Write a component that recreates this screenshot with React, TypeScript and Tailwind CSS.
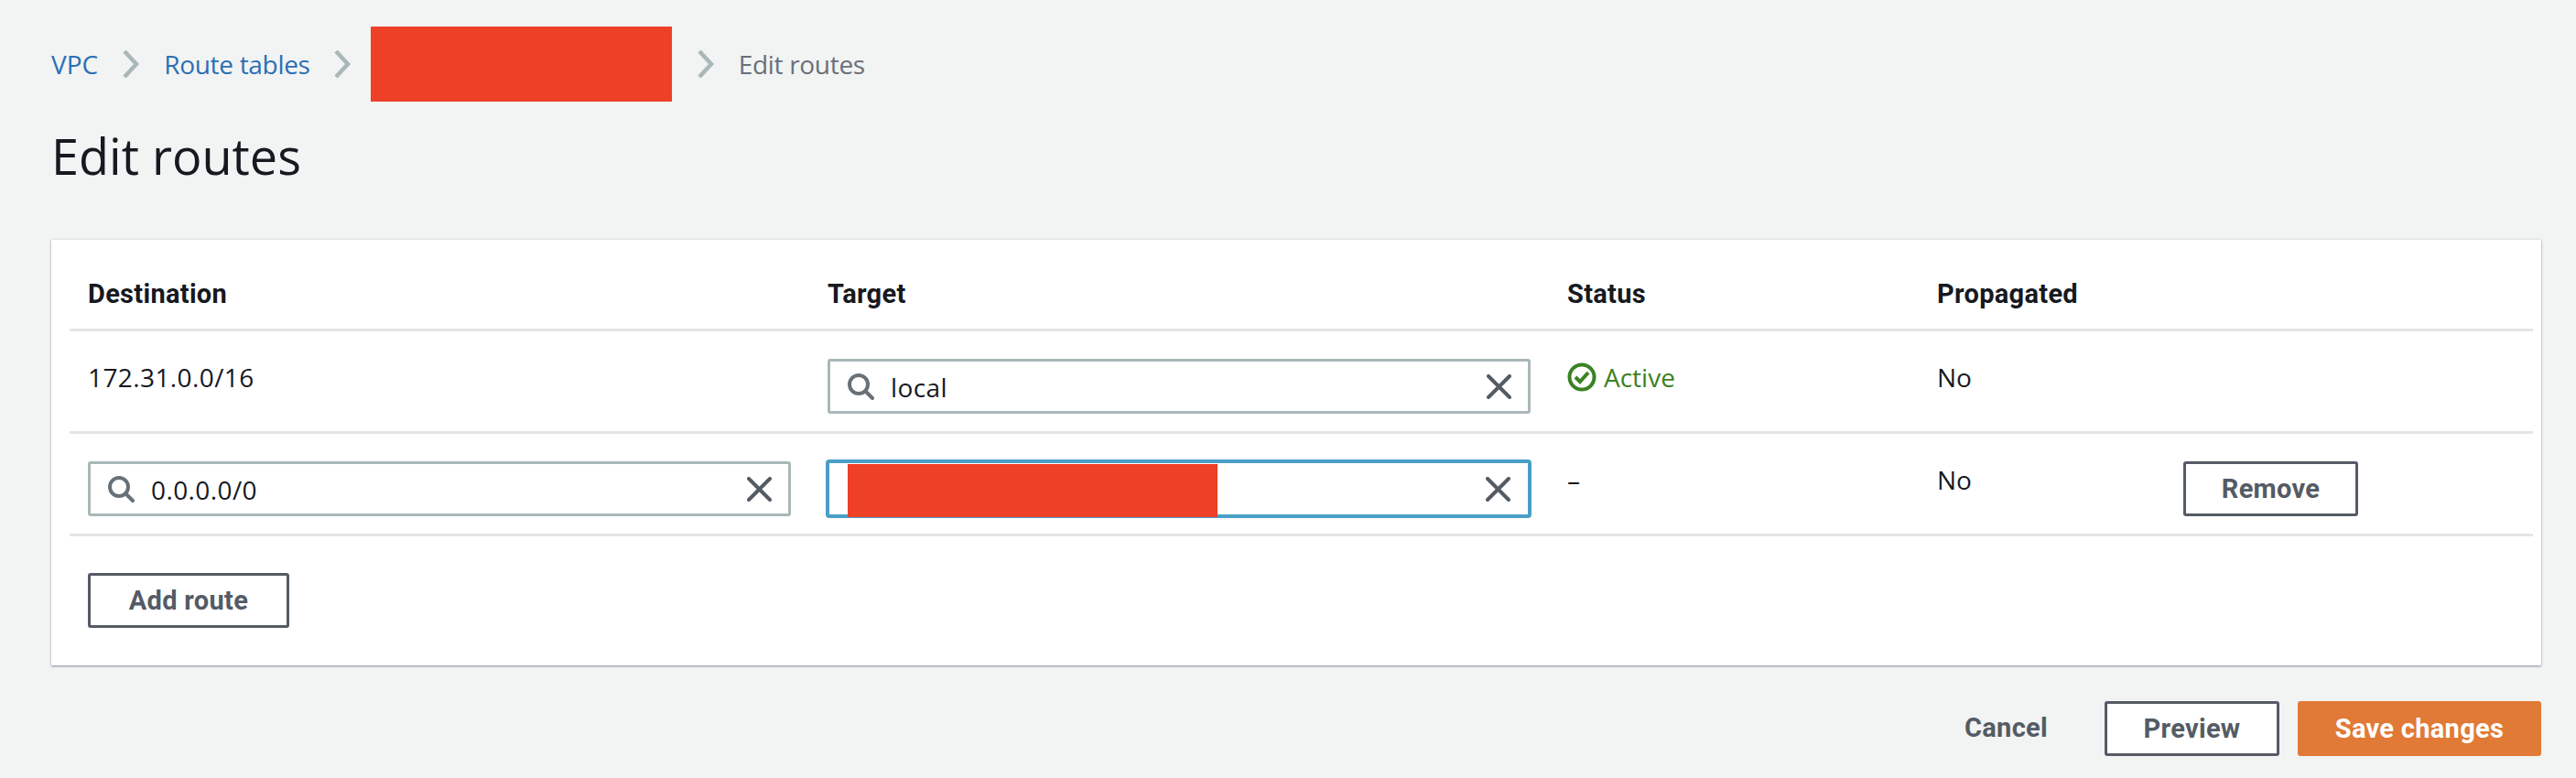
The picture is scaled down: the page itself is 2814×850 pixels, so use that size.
const ROW = "grid grid-cols-[808px_808px_404px_269px_1fr] items-start pl-[20px] border-b-[3px] border-[#e4e6e6]";
const BOLD = "font-['Roboto',sans-serif] font-bold text-[29px] tracking-[0.3px]";

function Chevron() {
    return (
        <svg width="18" height="30" viewBox="0 0 18 30" fill="none" stroke="#aab7b8" strokeWidth="4.5" className="shrink-0">
            <path d="M2 1 L15 15 L2 29"/>
        </svg>
    );
}

function SearchIcon() {
    return (
        <svg width="29" height="29" viewBox="0 0 29 29" fill="none" stroke="#687078" strokeWidth="4" strokeLinecap="round" className="shrink-0">
            <circle cx="12" cy="12" r="10"/>
            <path d="M20 20 L27 27"/>
        </svg>
    );
}

function ClearIcon() {
    return (
        <svg width="27" height="27" viewBox="0 0 27 27" fill="none" stroke="#545b64" strokeWidth="4" strokeLinecap="round" className="shrink-0">
            <path d="M2 2 L25 25 M25 2 L2 25"/>
        </svg>
    );
}

function StatusIcon() {
    return (
        <svg width="32" height="32" viewBox="0 0 32 32" fill="none" stroke="#3b8224" strokeWidth="4" className="shrink-0">
            <circle cx="16" cy="16" r="13.5"/>
            <path d="M9 16 L14 21 L23 11"/>
        </svg>
    );
}

function SearchInput({value}: {value: string}) {
    return (
        <div className="flex items-center w-[768px] h-[60px] bg-white border-[3px] border-[#aab7b8] rounded-[3px] pl-[19px] pr-[18px]">
            <SearchIcon/>
            <span className="ml-[18px] pt-[2px] flex-1 text-[28px] tracking-[0.4px] text-[#16191f]">{value}</span>
            <ClearIcon/>
        </div>
    );
}

function OutlineButton({label, width}: {label: string, width: string}) {
    return (
        <button className={`${width} ${BOLD} h-[60px] pt-[2px] bg-white border-[3px] border-[#545b64] rounded-[3px] text-[#545b64]`}>
            {label}
        </button>
    );
}

export default function App() {
    return (
        <div className="min-h-[850px] bg-[#f2f3f3] pl-[56px] pr-[38px] font-['Open_Sans',sans-serif] text-[28px] text-[#16191f]">
            <div className="flex items-center pt-[29px] h-[111px]">
                <span className="text-[#2a6fb5]">VPC</span>
                <div className="ml-[27px] mr-[27px]"><Chevron/></div>
                <span className="text-[#2a6fb5] tracking-[-0.3px]">Route tables</span>
                <div className="ml-[26px] mr-[22px]"><Chevron/></div>
                <div className="w-[329px] h-[82px] bg-[#ee4026]"></div>
                <div className="ml-[28px] mr-[27px]"><Chevron/></div>
                <span className="text-[#687078] tracking-[-0.3px]">Edit routes</span>
            </div>

            <h1 className="mt-[27px] mb-[60px] text-[54px] leading-[64px] font-medium">Edit routes</h1>

            <div className="bg-white pl-[20px] pr-[9px] pb-[41px] w-[2720px] shadow-[0_1px_2px_#7d8998,0_-1px_2px_#e4e6e6]">
                <div className={`${ROW} ${BOLD} h-[100px] pt-[39px] leading-[40px]`}>
                    <span>Destination</span>
                    <span>Target</span>
                    <span>Status</span>
                    <span>Propagated</span>
                </div>

                <div className={`${ROW} h-[112px] pt-[30px]`}>
                    <span className="leading-[40px] tracking-[0.4px]">172.31.0.0/16</span>
                    <SearchInput value="local"/>
                    <span className="flex items-center gap-[8px] leading-[40px] text-[#3b8224]"><StatusIcon/>Active</span>
                    <span className="leading-[40px]">No</span>
                </div>

                <div className={`${ROW} h-[112px] pt-[30px]`}>
                    <SearchInput value="0.0.0.0/0"/>
                    <div className="-mt-[2px] -ml-[2px] flex w-[771px] h-[64px] bg-white border-[4px] border-[#4a9fc7] rounded-[4px] pr-[19px]">
                        <div className="ml-[20px] mt-[1px] w-[404px] h-[58px] bg-[#ee4026]"></div>
                        <div className="ml-auto self-center"><ClearIcon/></div>
                    </div>
                    <span className="leading-[40px]">–</span>
                    <span className="leading-[40px]">No</span>
                    <OutlineButton label="Remove" width="w-[191px]"/>
                </div>

                <div className="pl-[20px] pt-[40px]">
                    <OutlineButton label="Add route" width="w-[220px]"/>
                </div>
            </div>

            <div className="flex justify-end items-center mt-[39px] w-[2720px]">
                <span className={`${BOLD} mr-[62px] text-[#545b64]`}>Cancel</span>
                <OutlineButton label="Preview" width="w-[191px]"/>
                <button className={`${BOLD} ml-[20px] w-[266px] h-[60px] pt-[2px] bg-[#e07a36] rounded-[3px] text-white`}>Save changes</button>
            </div>
        </div>
    );
}
